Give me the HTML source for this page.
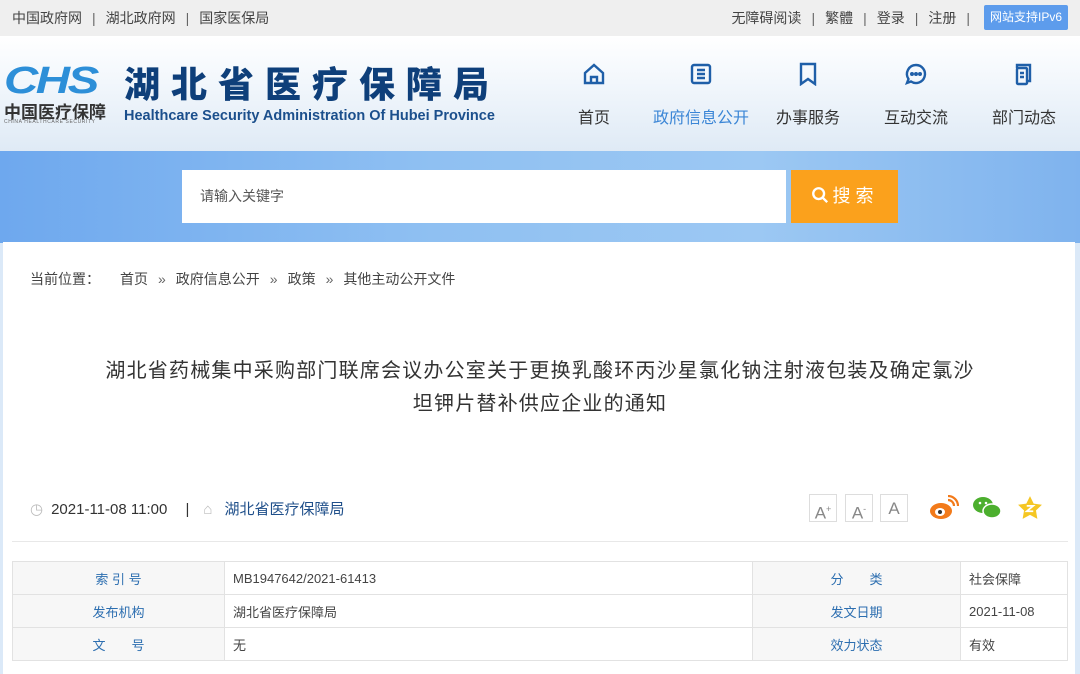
<!DOCTYPE html>
<html><head><meta charset="utf-8"><style>
*{margin:0;padding:0;box-sizing:border-box}
body{width:1080px;height:674px;overflow:hidden;font-family:"Liberation Sans","Noto Sans CJK SC",sans-serif;background:#dbe9f8;position:relative;color:#333}
.top{position:absolute;left:0;top:0;width:1080px;height:36px;background:#efefef;font-size:14px;color:#444;line-height:36px}
.top .l{position:absolute;left:12px}
.top .r{position:absolute;right:100px}
.top .sep{margin:0 10px;color:#666}
.ipv6{position:absolute;right:12px;top:5px;width:84px;height:25px;background:#5d9cec;color:#fff;font-size:12px;line-height:25px;text-align:center;border-radius:2px}
.hdr{position:absolute;left:0;top:36px;width:1080px;height:115px;background:linear-gradient(180deg,#fff 0%,#f2f7fc 40%,#dfeaf5 100%)}
.band{position:absolute;left:0;top:151px;width:1080px;height:92px;background:linear-gradient(90deg,#6ea8ee,#8fc0f2 40%,#9cc8f3 70%,#7fb3ee)}
.logo{position:absolute;left:4px;top:60px;font:italic 900 38px "Liberation Sans",sans-serif;color:#2d8fd8;letter-spacing:-2px;transform:scaleX(1.25);transform-origin:left}
.logocn{position:absolute;left:4px;top:98px;font-size:17px;font-weight:bold;color:#333}
.logoen{position:absolute;left:4px;top:119px;font-size:5px;color:#666;letter-spacing:0.6px;white-space:nowrap}
.title{position:absolute;left:124px;top:56px;font-size:36px;font-weight:900;color:#0e3f7a;letter-spacing:11px;white-space:nowrap}
.sub{position:absolute;left:124px;top:108px;font-size:14.5px;font-weight:bold;color:#1b4f8c;white-space:nowrap}
.nav{position:absolute;top:62px;text-align:center;font-size:16px;color:#333}
.nav svg{display:block;margin:0 auto 18px}
.search{position:absolute;left:182px;top:170px;width:604px;height:53px;background:#fff;font-size:14px;color:#555;line-height:53px;padding-left:18px}
.btn{position:absolute;left:791px;top:170px;width:107px;height:53px;background:#fba11c;color:#fff;font-size:18px;line-height:53px;text-align:center;letter-spacing:5px}
.card{position:absolute;left:3px;top:242px;width:1072px;height:432px;background:#fff}
.bc{position:absolute;left:30px;top:269px;font-size:14px;color:#444}
.bc b{font-weight:normal;margin:0 10px;color:#666}
.h1{position:absolute;left:40px;width:1000px;top:355px;text-align:center;font-size:20px;line-height:33px;color:#333;letter-spacing:1.2px}
.meta{position:absolute;left:30px;top:500px;font-size:15px;color:#333;line-height:20px}
.line{position:absolute;left:12px;top:541px;width:1056px;height:1px;background:#e8e8e8}
.fs{position:absolute;top:494px;width:28px;height:28px;border:1px solid #ddd;color:#888;font-size:17px;text-align:center;line-height:28px}
table{position:absolute;left:12px;top:561px;width:1056px;border-collapse:collapse;font-size:13px}
td{border:1px solid #e2e2e2;height:33px;padding-left:8px;color:#444}
td.k{background:#f7f7f7;color:#2c6eb0;text-align:center;padding:0}
</style></head><body>
<div class="top"><span class="l">中国政府网<span class="sep">|</span>湖北政府网<span class="sep">|</span>国家医保局</span>
<span class="r">无障碍阅读<span class="sep">|</span>繁體<span class="sep">|</span>登录<span class="sep">|</span>注册<span class="sep">|</span></span>
<div class="ipv6">网站支持IPv6</div></div>
<div class="hdr"></div>
<div class="logo">CHS</div>
<div class="logocn">中国医疗保障</div>
<div class="logoen">CHINA HEALTHCARE SECURITY</div>
<div class="title">湖北省医疗保障局</div>
<div class="sub">Healthcare Security Administration Of Hubei Province</div>

<div class="nav" style="left:570px;width:48px"><svg width="24" height="24" viewBox="0 0 24 24" fill="none" stroke="#1f5fa8" stroke-width="2.4"><path d="M3 11L12 3l9 8v10H3z"/><path d="M9 21v-6h6v6"/></svg>首页</div>
<div class="nav" style="left:650px;width:102px;color:#3b86d6"><svg width="24" height="24" viewBox="0 0 24 24" fill="none" stroke="#1f5fa8" stroke-width="2.4"><rect x="3" y="3" width="18" height="18" rx="2"/><path d="M8 8h8M8 12h8M8 16h8"/></svg>政府信息公开</div>
<div class="nav" style="left:772px;width:72px"><svg width="24" height="24" viewBox="0 0 24 24" fill="none" stroke="#1f5fa8" stroke-width="2.4"><path d="M5 2h14v20l-7-5-7 5z"/></svg>办事服务</div>
<div class="nav" style="left:880px;width:72px"><svg width="24" height="24" viewBox="0 0 24 24" fill="none" stroke="#1f5fa8" stroke-width="2.4"><path d="M12 3a9 9 0 1 1-5 16.5L3 21l1.5-4A9 9 0 0 1 12 3z"/><circle cx="8" cy="12" r=".8" fill="#1f5fa8"/><circle cx="12" cy="12" r=".8" fill="#1f5fa8"/><circle cx="16" cy="12" r=".8" fill="#1f5fa8"/></svg>互动交流</div>
<div class="nav" style="left:988px;width:72px"><svg width="24" height="24" viewBox="0 0 24 24" fill="none" stroke="#1f5fa8" stroke-width="2.4"><path d="M5 6V3h13v16h-3"/><rect x="5" y="6" width="10" height="16" rx="1"/><path d="M8 11h4M8 15h4"/></svg>部门动态</div>

<div class="band"></div>
<div class="search">请输入关键字</div>
<div class="btn"><svg width="18" height="18" viewBox="0 0 20 20" style="vertical-align:-2px;margin-right:4px" fill="none" stroke="#fff" stroke-width="2.6"><circle cx="8.5" cy="8.5" r="6"/><path d="M13 13l5 5"/></svg>搜索</div>

<div class="card"></div>
<div class="bc">当前位置：<b></b>首页<b>»</b>政府信息公开<b>»</b>政策<b>»</b>其他主动公开文件</div>
<div class="h1">湖北省药械集中采购部门联席会议办公室关于更换乳酸环丙沙星氯化钠注射液包装及确定氯沙<br>坦钾片替补供应企业的通知</div>
<div class="meta"><span style="color:#bbb;margin-right:8px">◷</span>2021-11-08 11:00 <span style="margin:0 14px">|</span><span style="color:#bbb;margin-right:12px">⌂</span><span style="color:#1f4f8a">湖北省医疗保障局</span></div>
<div class="fs" style="left:809px">A<sup style="font-size:9px">+</sup></div>
<div class="fs" style="left:845px">A<sup style="font-size:9px">-</sup></div>
<div class="fs" style="left:880px">A</div>
<svg style="position:absolute;left:929px;top:495px" width="30" height="26" viewBox="0 0 30 26"><ellipse cx="12" cy="16" rx="11" ry="8" fill="#f27a1a"/><ellipse cx="11" cy="17" rx="5" ry="4" fill="#fff"/><circle cx="11" cy="17" r="2" fill="#333"/><path d="M19 5a6 6 0 0 1 6 6M19 1a10 10 0 0 1 10 10" stroke="#f27a1a" stroke-width="2.2" fill="none"/></svg>
<svg style="position:absolute;left:972px;top:495px" width="30" height="26" viewBox="0 0 30 26"><ellipse cx="11" cy="10" rx="10" ry="8" fill="#4caf2e"/><ellipse cx="20" cy="16" rx="9" ry="7" fill="#4caf2e" stroke="#fff" stroke-width="1.5"/><circle cx="8" cy="8" r="1.3" fill="#fff"/><circle cx="14" cy="8" r="1.3" fill="#fff"/></svg>
<svg style="position:absolute;left:1017px;top:495px" width="26" height="26" viewBox="0 0 24 24"><path d="M12 1l3.4 7 7.6 1-5.5 5.3 1.3 7.7L12 18.4 5.2 22l1.3-7.7L1 9l7.6-1z" fill="#f5c623"/><path d="M9 10h6l-6 5h6" stroke="#fff" stroke-width="1.6" fill="none"/></svg>
<div class="line"></div>
<table>
<tr><td class="k" style="width:212px">索 引 号</td><td style="width:528px">MB1947642/2021-61413</td><td class="k" style="width:208px">分　　类</td><td>社会保障</td></tr>
<tr><td class="k">发布机构</td><td>湖北省医疗保障局</td><td class="k">发文日期</td><td>2021-11-08</td></tr>
<tr><td class="k">文　　号</td><td>无</td><td class="k">效力状态</td><td>有效</td></tr>
</table>
</body></html>
